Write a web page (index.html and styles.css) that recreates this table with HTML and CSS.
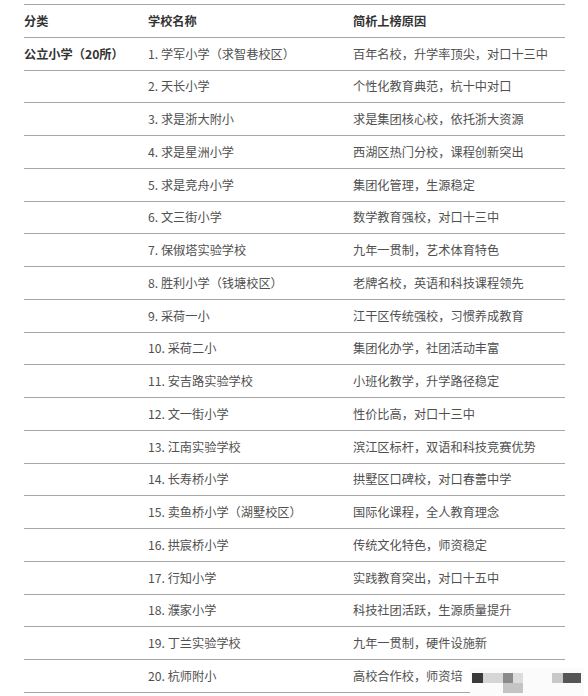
FILE: index.html
```html
<!DOCTYPE html>
<html lang="zh">
<head>
<meta charset="utf-8">
<link rel="stylesheet" href="styles.css">
</head>
<body>
<div class="page">
  <div class="table">
    <div class="row head"><div>分类</div><div>学校名称</div><div>简析上榜原因</div></div>
    <div class="row"><div class="cat">公立小学（20所）</div><div>1. 学军小学（求智巷校区）</div><div>百年名校，升学率顶尖，对口十三中</div></div>
    <div class="row"><div></div><div>2. 天长小学</div><div>个性化教育典范，杭十中对口</div></div>
    <div class="row"><div></div><div>3. 求是浙大附小</div><div>求是集团核心校，依托浙大资源</div></div>
    <div class="row"><div></div><div>4. 求是星洲小学</div><div>西湖区热门分校，课程创新突出</div></div>
    <div class="row"><div></div><div>5. 求是竞舟小学</div><div>集团化管理，生源稳定</div></div>
    <div class="row"><div></div><div>6. 文三街小学</div><div>数学教育强校，对口十三中</div></div>
    <div class="row"><div></div><div>7. 保俶塔实验学校</div><div>九年一贯制，艺术体育特色</div></div>
    <div class="row"><div></div><div>8. 胜利小学（钱塘校区）</div><div>老牌名校，英语和科技课程领先</div></div>
    <div class="row"><div></div><div>9. 采荷一小</div><div>江干区传统强校，习惯养成教育</div></div>
    <div class="row"><div></div><div>10. 采荷二小</div><div>集团化办学，社团活动丰富</div></div>
    <div class="row"><div></div><div>11. 安吉路实验学校</div><div>小班化教学，升学路径稳定</div></div>
    <div class="row"><div></div><div>12. 文一街小学</div><div>性价比高，对口十三中</div></div>
    <div class="row"><div></div><div>13. 江南实验学校</div><div>滨江区标杆，双语和科技竞赛优势</div></div>
    <div class="row"><div></div><div>14. 长寿桥小学</div><div>拱墅区口碑校，对口春蕾中学</div></div>
    <div class="row"><div></div><div>15. 卖鱼桥小学（湖墅校区）</div><div>国际化课程，全人教育理念</div></div>
    <div class="row"><div></div><div>16. 拱宸桥小学</div><div>传统文化特色，师资稳定</div></div>
    <div class="row"><div></div><div>17. 行知小学</div><div>实践教育突出，对口十五中</div></div>
    <div class="row"><div></div><div>18. 濮家小学</div><div>科技社团活跃，生源质量提升</div></div>
    <div class="row"><div></div><div>19. 丁兰实验学校</div><div>九年一贯制，硬件设施新</div></div>
    <div class="row"><div></div><div>20. 杭师附小</div><div>高校合作校，师资培</div></div>
  </div>
  <div class="mosaic">
    <span class="m1"></span><span class="m2"></span><span class="m3"></span><span class="m4"></span><span class="m5"></span><span class="m6"></span><span class="m7"></span>
  </div>
</div>
</body>
</html>
```
FILE: styles.css
```css
html, body {
  margin: 0;
  padding: 0;
  background: #ffffff;
}
.page {
  position: relative;
  width: 588px;
  height: 696px;
  overflow: hidden;
  font-family: "Noto Sans CJK SC", "Noto Sans", sans-serif;
  font-size: 12.2px;
  color: #505050;
}
.table {
  margin: 4px 0 0 24px;
  width: 541px;
  border-top: 1px solid #a6a6a6;
}
.row {
  display: grid;
  grid-template-columns: 124px 205px 212px;
  height: 32.76px;
  box-sizing: border-box;
  border-bottom: 1px solid #a6a6a6;
  align-items: center;
  white-space: nowrap;
}
.head {
  font-weight: bold;
  color: #333333;
}
.cat {
  font-weight: bold;
  color: #333333;
}
.mosaic {
  position: absolute;
  left: 470px;
  top: 668px;
  width: 114px;
  height: 28px;
  background: #fbfbfb;
}
.mosaic span {
  position: absolute;
}
.m1 { left: 2px; top: 5px; width: 11px; height: 10px; background: #3a3a3a; }
.m2 { left: 13px; top: 5px; width: 20px; height: 10px; background: #d6d6d6; }
.m3 { left: 33px; top: 5px; width: 10px; height: 10px; background: #8a8a8a; }
.m4 { left: 33px; top: 15px; width: 20px; height: 10px; background: #c4c4c4; }
.m5 { left: 43px; top: 5px; width: 10px; height: 10px; background: #dcdcdc; }
.m6 { left: 82px; top: 5px; width: 11px; height: 10px; background: #c8c8c8; }
.m7 { left: 93px; top: 5px; width: 18px; height: 10px; background: #555555; }
```
